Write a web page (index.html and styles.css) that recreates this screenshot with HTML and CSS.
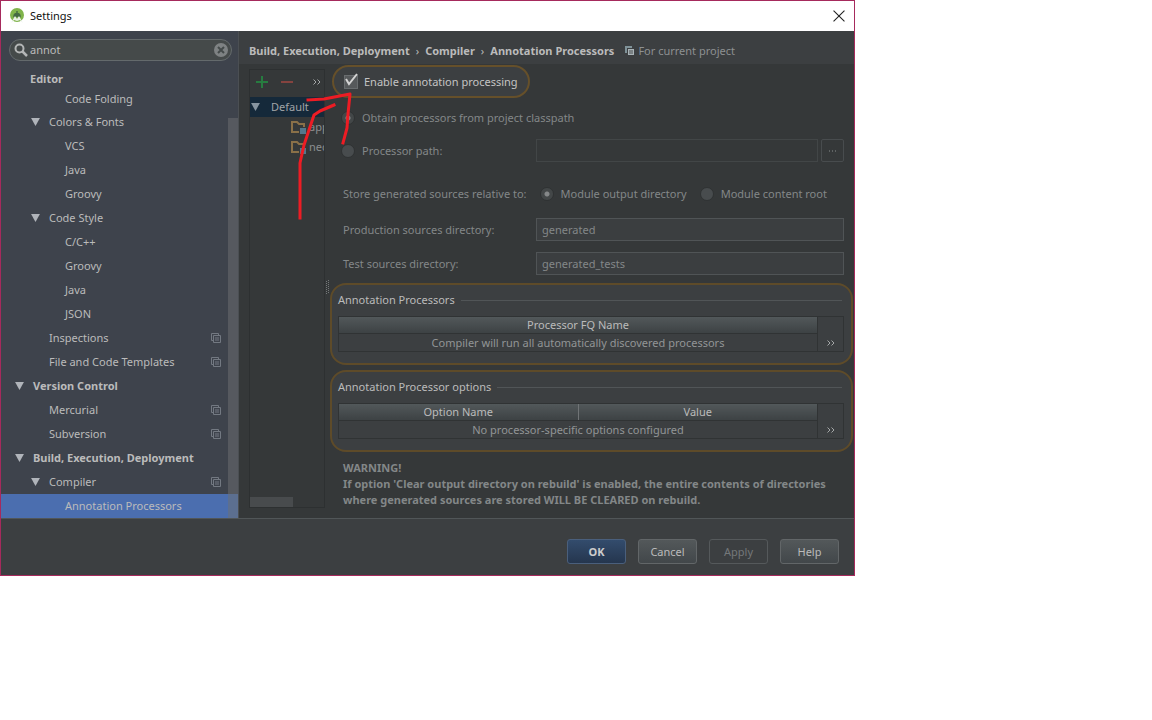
FILE: index.html
```html
<!DOCTYPE html>
<html lang="en">
<head>
<meta charset="utf-8">
<title>Settings</title>
<link rel="stylesheet" href="styles.css">
</head>
<body>
<svg class="defs" aria-hidden="true">
  <symbol id="copy" viewBox="0 0 10 10"><path d="M2.500 7.500h-2v-7h7v2M2.500 2.500h7v7h-7zM4 5h4M4 7h4" fill="none" stroke="currentColor"/></symbol>
  <symbol id="down" viewBox="0 0 10 9"><path d="M0 0h10L5 9z" fill="currentColor"/></symbol>
  <symbol id="folder" viewBox="0 0 16 14"><path d="M8 12H1V2h5l2 2h5v3" fill="none" stroke="#8a7048" stroke-width="2"/><path d="M9 8h6v6H9z" fill="#54788d"/></symbol>
  <symbol id="more" viewBox="0 0 8 6"><path d="M.5.500L3 3 .5 5.500M4.500.500L7 3 4.500 5.500" fill="none" stroke="currentColor"/></symbol>
</svg>
<div class="dialog">
  <header class="titlebar">
    <svg class="logo" viewBox="0 0 16 16"><circle cx="8" cy="7" r="7" fill="#80b44b"/><path d="M8 3v2M5 8.500a3 3 0 0 1 6 0z" stroke="#466b43" stroke-width="1.500" fill="#466b43"/><path d="M2 15l4-7 2 3 2-3 4 7-3-3-3 1-3-1z" fill="#e9f0e6"/><path d="M7 7h2l-1 2z" fill="#466b43"/></svg>
    <span class="title">Settings</span>
    <button class="close" aria-label="Close"><svg viewBox="0 0 11 11"><path d="M.5.500l10 10M10.500.500l-10 10" stroke="#222" fill="none"/></svg></button>
  </header>
  <div class="body">
    <aside class="sidebar">
      <label class="search">
        <svg class="glass" viewBox="0 0 14 14"><circle cx="5.500" cy="5.500" r="4" fill="none" stroke="#b4b6b6" stroke-width="2"/><path d="M8.500 8.500l4.500 4.500" stroke="#b4b6b6" stroke-width="2.500"/></svg>
        <input class="search-input" type="text" value="annot" aria-label="Search settings">
        <button class="clear" aria-label="Clear search"><svg viewBox="0 0 14 14"><circle cx="7" cy="7" r="7" fill="#7e8283"/><path d="M4 4l6 6M10 4l-6 6" stroke="#444a4a" stroke-width="2"/></svg></button>
      </label>
      <ul class="tree">
        <li class="row short section">Editor</li>
        <li class="row lvl3 short">Code Folding</li>
        <li class="row lvl2 open"><svg class="arrow"><use href="#down"/></svg>Colors &amp; Fonts</li>
        <li class="row lvl3">VCS</li>
        <li class="row lvl3">Java</li>
        <li class="row lvl3">Groovy</li>
        <li class="row lvl2 open"><svg class="arrow"><use href="#down"/></svg>Code Style</li>
        <li class="row lvl3">C/C++</li>
        <li class="row lvl3">Groovy</li>
        <li class="row lvl3">Java</li>
        <li class="row lvl3">JSON</li>
        <li class="row lvl2">Inspections<svg class="copy"><use href="#copy"/></svg></li>
        <li class="row lvl2">File and Code Templates<svg class="copy"><use href="#copy"/></svg></li>
        <li class="row lvl1 open"><svg class="arrow"><use href="#down"/></svg>Version Control</li>
        <li class="row lvl2">Mercurial<svg class="copy"><use href="#copy"/></svg></li>
        <li class="row lvl2">Subversion<svg class="copy"><use href="#copy"/></svg></li>
        <li class="row lvl1 open"><svg class="arrow"><use href="#down"/></svg>Build, Execution, Deployment</li>
        <li class="row lvl2 open"><svg class="arrow"><use href="#down"/></svg>Compiler<svg class="copy"><use href="#copy"/></svg></li>
        <li class="row lvl3 selected">Annotation Processors</li>
      </ul>
      <div class="scrollbar"></div>
    </aside>
    <main class="main">
      <nav class="crumbs">
        <span>Build, Execution, Deployment</span><span class="sep">›</span><span>Compiler</span><span class="sep">›</span><span>Annotation Processors</span>
        <svg class="scope-icon" viewBox="0 0 10 10"><path d="M0 0h7v2H2v5H0z" fill="#7f9298"/><path d="M3 3h6v6H3z" fill="#a9b3b7"/><path d="M4 5h4M4 7h4" stroke="#4b4f51"/></svg>
        <span class="scope">For current project</span>
      </nav>
      <div class="content">
        <section class="profiles">
          <div class="tools">
            <button class="tool" aria-label="Add"><svg class="tool-icon" viewBox="0 0 12 12"><path d="M6 0v12M0 6h12" stroke="#277c40" stroke-width="2"/></svg></button>
            <button class="tool" aria-label="Remove"><svg class="tool-icon" viewBox="0 0 12 12"><path d="M0 6h12" stroke="#85433f" stroke-width="2"/></svg></button>
            <button class="tool last" aria-label="More"><svg class="more"><use href="#more"/></svg></button>
          </div>
          <ul class="modules">
            <li class="module root"><svg class="arrow"><use href="#down"/></svg>Default</li>
            <li class="module"><svg class="folder"><use href="#folder"/></svg>app</li>
            <li class="module"><svg class="folder"><use href="#folder"/></svg>nec</li>
          </ul>
          <div class="hscroll"></div>
        </section>
        <div class="splitter"><svg class="grip" viewBox="0 0 4 14"><path d="M.5 1v13M2.500 0v13" stroke="#747879" stroke-dasharray="1 1"/></svg></div>
        <form class="form">
          <label class="enable"><input class="check" type="checkbox" checked><svg class="tick" viewBox="0 0 16 16"><path d="M3 7l3 5 8-10" fill="none" stroke="#d4d4d4" stroke-width="2"/></svg>Enable annotation processing</label>
          <div class="line first"><label class="option"><input class="radio" type="radio" name="source" checked disabled>Obtain processors from project classpath</label></div>
          <div class="line field path">
            <label class="option"><input class="radio" type="radio" name="source" disabled>Processor path:</label>
            <span class="path-box"><input class="text dim" type="text" aria-label="Processor path" disabled><button class="browse" type="button" disabled aria-label="Browse"><svg viewBox="0 0 8 2"><path d="M0 1h1M3 1h1M6 1h1" stroke="#8a8e8f"/></svg></button></span>
          </div>
          <div class="line store">
            <span class="store-label">Store generated sources relative to:</span>
            <label class="option"><input class="radio" type="radio" name="relative" checked disabled>Module output directory</label>
            <label class="option"><input class="radio" type="radio" name="relative" disabled>Module content root</label>
          </div>
          <div class="line field prod"><label for="prod">Production sources directory:</label><input class="text" id="prod" type="text" value="generated" disabled></div>
          <div class="line field test"><label for="test">Test sources directory:</label><input class="text" id="test" type="text" value="generated_tests" disabled></div>
          <section class="group">
            <h2 class="legend">Annotation Processors</h2>
            <div class="grid">
              <table class="table"><thead><tr><th>Processor FQ Name</th></tr></thead><tbody><tr><td>Compiler will run all automatically discovered processors</td></tr></tbody></table>
              <button class="side" type="button" aria-label="More"><svg class="more"><use href="#more"/></svg></button>
            </div>
          </section>
          <section class="group">
            <h2 class="legend">Annotation Processor options</h2>
            <div class="grid">
              <table class="table"><thead><tr><th>Option Name</th><th>Value</th></tr></thead><tbody><tr><td colspan="2">No processor-specific options configured</td></tr></tbody></table>
              <button class="side" type="button" aria-label="More"><svg class="more"><use href="#more"/></svg></button>
            </div>
          </section>
          <p class="warning">WARNING!<br>If option 'Clear output directory on rebuild' is enabled, the entire contents of directories where generated sources are stored WILL BE CLEARED on rebuild.</p>
        </form>
      </div>
    </main>
  </div>
  <footer class="footer">
    <button class="btn primary">OK</button>
    <button class="btn">Cancel</button>
    <button class="btn" disabled>Apply</button>
    <button class="btn">Help</button>
  </footer>
  <svg class="scribble" viewBox="0 0 70 140" aria-hidden="true"><path d="M12 134V79l4-18 10-30 6-4 14-6M20 16l16-1 26-5-2 20-1 14-4 15" fill="none" stroke="#ed1c24" stroke-width="3" stroke-linejoin="round" stroke-linecap="square"/></svg>
</div>
</body>
</html>
```
FILE: styles.css
```css
* { box-sizing: border-box; }
body { margin: 0; background: #fff; color: #bbb; font: 11px/16px "Noto Sans", "Open Sans", sans-serif; }
button, input { font: inherit; color: inherit; margin: 0; padding: 0; }
button { background: none; border: 0; }
svg { display: block; flex: none; }
ul { list-style: none; margin: 0; padding: 0; }
.defs { display: none; }

.dialog { position: relative; width: 100%; max-width: 855px; background: #3c3f41; border: 1px solid #a62a5c; }
.titlebar { display: flex; align-items: center; gap: 5px; height: 30px; padding: 0 9px 0 8px; background: #fff; color: #111; }
.logo { width: 16px; height: 16px; }
.title { flex: 1; }
.close svg { width: 12px; height: 12px; }

.body { display: flex; border-bottom: 1px solid #515658; }
.sidebar { position: relative; flex: none; width: 238px; background: #3e434c; border-right: 1px solid #4b4f53; }
.search { display: flex; align-items: center; gap: 2px; height: 22px; margin: 8px 6px 7px 8px; padding: 0 3px 0 4px; border: 1px solid #646a6c; border-radius: 11px; background: #454a4a; }
.glass { width: 14px; height: 14px; }
.search-input { flex: 1; min-width: 0; border: 0; background: none; outline: 0; }
.clear svg { width: 14px; height: 14px; }
.row { display: flex; align-items: center; height: 24px; padding-right: 17px; white-space: nowrap; }
.short { height: 20px; }
.tree { padding-top: 1px; }
.short + .open { margin-top: 1px; }
.section { padding-left: 29px; font-weight: bold; }
.lvl1 { padding-left: 32px; font-weight: bold; }
.lvl2 { padding-left: 48px; }
.lvl3 { padding-left: 64px; }
.lvl1.open { padding-left: 14px; }
.lvl2.open { padding-left: 30px; }
.arrow { width: 9px; height: 8px; margin-right: 9px; color: #b0b4ba; }
.copy { width: 10px; height: 10px; margin-left: auto; color: #737982; }
.selected { background: #4b6eaf; }
.scrollbar { position: absolute; top: 87px; right: 0; bottom: 0; width: 10px; background: rgba(110, 112, 114, .5); }

.main { flex: 1; min-width: 0; display: flex; flex-direction: column; background: #353839; }
.crumbs { display: flex; align-items: center; height: 33px; padding: 6px 10px 0; background: #3c3f41; font-weight: bold; white-space: nowrap; }
.sep { padding: 0 6px; font-weight: normal; }
.scope-icon { width: 10px; height: 10px; margin: 0 3px 0 11px; }
.scope { font-weight: normal; color: #8d9091; }
.content { flex: 1; display: flex; padding: 1px 0 10px 10px; }
.profiles { flex: none; display: flex; flex-direction: column; width: 76px; margin-top: 4px; border: 1px solid #2d3031; overflow: hidden; }
.tools { display: flex; align-items: center; gap: 13px; height: 27px; padding: 0 3px 4px 6px; }
.tool-icon { width: 12px; height: 12px; }
.last { margin-left: auto; }
.more { width: 8px; height: 6px; color: #a5a8a9; }
.module { display: flex; align-items: center; height: 20px; padding-left: 41px; white-space: nowrap; color: #8b8e8f; }
.root { padding-left: 1px; background: #15293a; color: #a0a4a7; }
.root .arrow { margin-right: 11px; color: #8795a0; }
.folder { width: 16px; height: 14px; margin-right: 2px; }
.hscroll { width: 43px; height: 10px; margin-top: auto; background: #484b4d; }
.splitter { flex: none; display: flex; align-items: center; justify-content: flex-end; width: 5px; }
.grip { width: 4px; height: 14px; }

.form { flex: 1; min-width: 0; padding-right: 1px; color: #838788; }
.enable { display: inline-flex; align-items: center; height: 33px; margin-left: 2px; padding: 0 10px; border: 2px solid #66502a; border-radius: 17px; background: #3c3f41; color: #c4c4c4; position: relative; vertical-align: top; white-space: nowrap; }
.check { appearance: none; width: 14px; height: 14px; margin-right: 6px; border: 1px solid #696d6f; background: #56595b; }
.tick { position: absolute; left: 9px; top: 5px; width: 16px; height: 16px; }
.line { display: flex; align-items: center; height: 22px; margin: 0 9px 0 11px; padding-left: 2px; white-space: nowrap; }
.first { margin-top: 9px; }
.path { margin-top: 10px; }
.store { margin-top: 21px; }
.prod { margin-top: 13px; }
.test { margin-top: 11px; }
.field { display: grid; grid-template-columns: 193px 1fr; height: 23px; }
.option { display: flex; align-items: center; gap: 7px; }
.radio { appearance: none; flex: none; width: 14px; height: 14px; margin-left: -2px; border: 1px solid #2f3233; border-radius: 50%; background: #484c4e; }
.radio:checked { background: radial-gradient(circle, #858889 2px, #434748 3px); }
.store { gap: 15px; }
.text { width: 100%; min-width: 0; height: 23px; padding: 0 5px; border: 1px solid #505456; background: #3b3e40; }
.text.dim { background: #353839; border-color: #424647; }
.path-box { display: flex; gap: 3px; }
.browse { flex: none; display: grid; place-items: center; width: 23px; height: 23px; border: 1px solid #484c4e; border-radius: 2px; }
.browse svg { width: 8px; height: 2px; }
.group { height: 82px; padding: 7px 7px 0 6px; border: 2px solid #5e4b29; border-radius: 16px; background: #3c3f41; color: #bbb; }
.test + .group { margin-top: 8px; }
.group + .group { margin-top: 5px; }
.legend { display: flex; align-items: center; gap: 6px; margin: 0 2px 8px 0; font: inherit; }
.legend::after { content: ""; flex: 1; height: 1px; background: #515557; }
.grid { display: flex; height: 36px; border: 1px solid #303334; }
.table { flex: 1; width: 100%; border-collapse: collapse; table-layout: fixed; }
.table th { height: 16px; padding: 0; border-bottom: 1px solid #303334; background: linear-gradient(#52585a, #3d4244); font-weight: normal; line-height: 16px; }
.table th + th { border-left: 1px solid #707476; }
.table td { padding: 0; color: #929596; text-align: center; line-height: 18px; }
.side { flex: none; display: flex; justify-content: center; align-items: flex-end; width: 26px; padding-bottom: 5px; border-left: 1px solid #303334; }
.warning { margin: 8px 9px 0 13px; font-weight: bold; }

.footer { display: flex; justify-content: flex-end; gap: 12px; padding: 20px 15px 11px; }
.btn { width: 59px; height: 25px; border: 1px solid #626668; border-radius: 3px; background: linear-gradient(#53585a, #42474a); }
.btn:disabled { background: none; border-color: #55595b; color: #74787a; }
.primary { border-color: #4a5f7c; background: linear-gradient(#334c6d, #25364e); font-weight: bold; color: #ccc; }
.scribble { position: absolute; left: 287px; top: 83px; width: 70px; height: 140px; pointer-events: none; }
```
